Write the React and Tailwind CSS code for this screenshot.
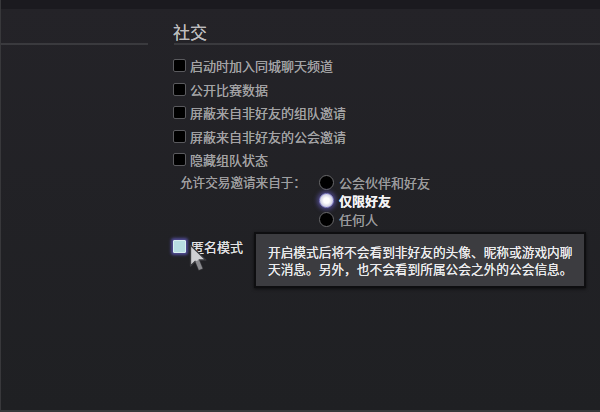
import React from "react";

const font = { fontFamily: '"Noto Sans CJK SC", "Noto Sans", sans-serif' };

const checks = [
  "启动时加入同城聊天频道",
  "公开比赛数据",
  "屏蔽来自非好友的组队邀请",
  "屏蔽来自非好友的公会邀请",
  "隐藏组队状态",
];

const radios = [
  { label: "公会伙伴和好友", selected: false },
  { label: "仅限好友", selected: true },
  { label: "任何人", selected: false },
];

function Checkbox() {
  return <div className="w-[13px] h-[13px] shrink-0 bg-black border-[1.5px] border-[#5a5a5e] rounded-[2px]" />;
}

function Radio({ selected }) {
  if (selected) {
    return (
      <div className="w-[15px] h-[15px] shrink-0 rounded-full border-[1.5px] border-[#8c88d8] bg-radial from-white from-30% to-[#a8a8c8] shadow-[0_0_4px_2px_rgba(110,100,210,0.55)]" />
    );
  }
  return <div className="w-[15px] h-[15px] shrink-0 rounded-full bg-black border-[1.5px] border-[#6a6a6c]" />;
}

function Cursor() {
  return (
    <svg
      className="absolute left-[188px] top-[244px] blur-[0.4px]"
      width="19"
      height="28"
      viewBox="0 0 14 21"
    >
      <path
        d="M1 1 L1 16.5 L4.6 13 L7.3 19.5 L10 18.4 L7.4 12 L12.5 12 Z"
        fill="#cfcfd2"
        stroke="#3a3a3e"
        strokeWidth="1"
        strokeLinejoin="round"
      />
      <path d="M4.6 13 L7.3 19.5 L10 18.4 L7.4 12 Z" fill="#8a8a8e" />
    </svg>
  );
}

export default function App() {
  return (
    <div
      className="relative w-[600px] h-[412px] overflow-hidden flex flex-col bg-linear-to-b from-[#242328] to-[#1f2023] border-l border-b-2 border-[#38383b] [text-shadow:0_0_0.6px_currentColor]"
      style={font}
    >
      {/* top strip */}
      <div className="h-[9px] shrink-0 bg-[#1b1a1f]" />

      <div className="flex">
        {/* left column divider */}
        <div className="w-[147px] shrink-0 pt-[34px]">
          <div className="h-[2px] bg-[#3a3a3e]" />
        </div>

        {/* settings column */}
        <div className="flex-1 ml-[26px] flex flex-col">
          <div className="h-[34px] pt-[14px] text-[17px] leading-[17px] text-[#bcbcbe] -ml-[1px]">社交</div>
          <div className="h-[2px] bg-[#3a3a3e]" />

          <div className="mt-[8.7px] -ml-[1px] flex flex-col">
            {checks.map((c) => (
              <div key={c} className="h-[23.6px] flex items-center gap-[4px]">
                <Checkbox />
                <span className="text-[13px] leading-none text-[#a2a2a4] whitespace-nowrap">{c}</span>
              </div>
            ))}
          </div>

          {/* trade invites */}
          <div className="mt-[1.5px] flex pl-[6px]">
            <div className="w-[139px] h-[18.5px] flex items-center text-[12.6px] leading-none text-[#9e9ea0] whitespace-nowrap">
              允许交易邀请来自于：
            </div>
            <div className="flex flex-col">
              {radios.map((r) => (
                <div key={r.label} className="h-[18.5px] flex items-center gap-[5px]">
                  <Radio selected={r.selected} />
                  <span
                    className={
                      r.selected
                        ? "text-[13px] leading-none text-[#f2f2f4] font-semibold"
                        : "text-[13px] leading-none text-[#9a9a9c]"
                    }
                  >
                    {r.label}
                  </span>
                </div>
              ))}
            </div>
          </div>

          {/* anonymous mode + tooltip */}
          <div className="mt-[3.25px] flex -ml-[1px]">
            <div className="w-[81px] h-[30px] flex items-center gap-[5px]">
              <div className="w-[13px] h-[13px] shrink-0 bg-[#b7dde2] border border-[#d8eef0] rounded-[1px] shadow-[0_0_3px_2px_rgba(100,92,200,0.7)]" />
              <span className="text-[13px] leading-none text-[#e2e2e4] whitespace-nowrap">匿名模式</span>
            </div>
            <div className="w-[332px] h-[56px] bg-[#3c3c40] border-2 border-[#0e0e10] pt-[9px] pl-[12px] shadow-[0_1px_3px_rgba(0,0,0,0.6)]">
              <div className="h-[17px] text-[12.7px] leading-[13px] flex items-center text-[#ececee] whitespace-nowrap">
                开启模式后将不会看到非好友的头像、昵称或游戏内聊
              </div>
              <div className="h-[17px] text-[12.7px] leading-[13px] flex items-center text-[#ececee] whitespace-nowrap">
                天消息。另外，也不会看到所属公会之外的公会信息。
              </div>
            </div>
          </div>
        </div>
      </div>

      <Cursor />
    </div>
  );
}
